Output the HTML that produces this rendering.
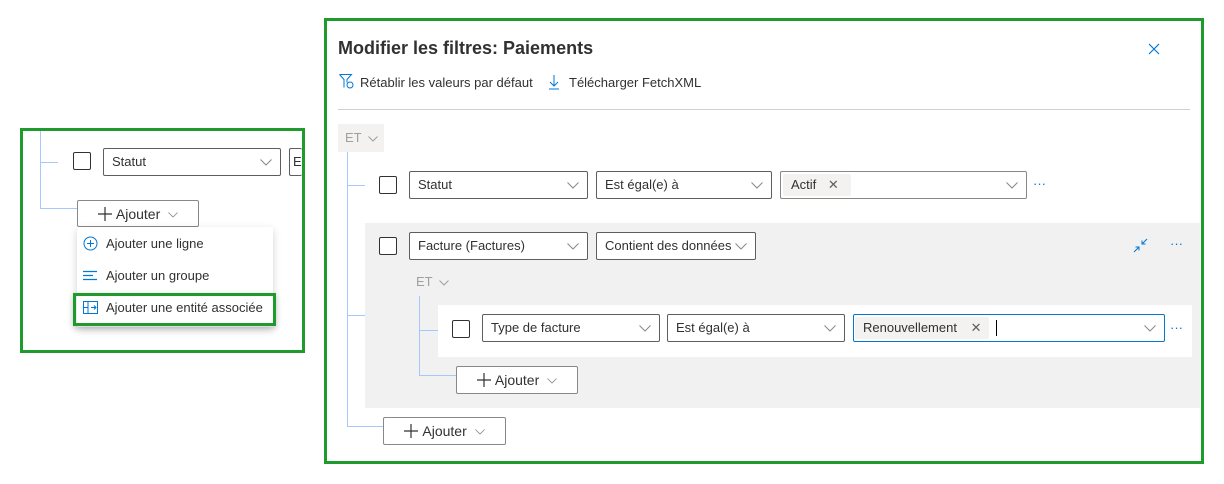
<!DOCTYPE html>
<html><head><meta charset="utf-8"><style>
*{box-sizing:border-box;margin:0;padding:0}
body{width:1224px;height:484px;background:#fff;position:relative;overflow:hidden;font-family:"Liberation Sans",sans-serif;color:#323130;font-size:13px}
.a{position:absolute}
.gb{position:absolute;border:3px solid #1f9a2c}
.dd{position:absolute;border:1px solid #605e5c;border-radius:2px;background:#fff;height:28px;line-height:26px;padding-left:8px;font-size:13px;white-space:nowrap;overflow:hidden}
.dd svg{position:absolute;right:8px;top:10px}
.cb{position:absolute;width:18px;height:18px;border:1px solid #323130;border-radius:2px;background:#fff}
.ln{position:absolute;background:#a6c8ff}
.btn{position:absolute;border:1px solid #8a8886;border-radius:2px;background:#fff;height:28px;line-height:26px;font-size:14px;text-align:center}
.btn .p{vertical-align:-2px;margin-right:4px}
.dots{position:absolute;color:#0078d4;font-size:13px;letter-spacing:0px}
.chip{position:absolute;background:#f3f2f1;border-radius:2px;height:22px;line-height:22px;padding-left:8px;font-size:13px}
</style></head><body>

<svg width="0" height="0" style="position:absolute"><defs>
<symbol id="ch" viewBox="0 0 12 7"><path d="M0.5 0.5L6 6L11.5 0.5" fill="none" stroke="#8a8886" stroke-width="1"/></symbol>
<symbol id="pl" viewBox="0 0 14 14"><path d="M7 0v14M0 7h14" stroke="#323130" stroke-width="1.2"/></symbol>
</defs></svg>

<!-- left box -->
<div class="gb" style="left:20px;top:128px;width:285px;height:225px"></div>
<div class="ln" style="left:40px;top:131px;width:1px;height:78px"></div>
<div class="ln" style="left:40px;top:162px;width:18px;height:1px"></div>
<div class="ln" style="left:40px;top:208px;width:37px;height:1px"></div>
<div class="cb" style="left:73px;top:152px"></div>
<div class="dd" style="left:103px;top:148px;width:178px">Statut<svg width="12" height="7"><use href="#ch"/></svg></div>
<div class="dd" style="left:289px;top:148px;width:13px;padding-left:3px;border-right:none">E</div>
<div class="btn" style="left:77px;top:200px;width:122px;height:27px"><svg class="p" width="14" height="14"><use href="#pl"/></svg>Ajouter <svg width="10" height="6" style="margin-left:4px;vertical-align:middle"><use href="#ch"/></svg></div>
<div class="a" style="left:77px;top:227px;width:196px;height:100px;background:#fff;box-shadow:0 3px 8px rgba(0,0,0,.18)"></div>
<svg class="a" style="left:83px;top:236px" width="15" height="15"><circle cx="7.5" cy="7.5" r="6.5" fill="none" stroke="#0078d4"/><path d="M7.5 4v7M4 7.5h7" stroke="#0078d4"/></svg>
<div class="a" style="left:106px;top:236px;font-size:13px">Ajouter une ligne</div>
<svg class="a" style="left:83px;top:270px" width="15" height="12"><path d="M0 1.5h14M0 5.5h10M0 9.5h14" stroke="#0078d4" stroke-width="1.2"/></svg>
<div class="a" style="left:106px;top:268px;font-size:13px">Ajouter un groupe</div>
<div class="a" style="left:73px;top:293px;width:203px;height:33px;border:3px solid #1f9a2c;box-shadow:0 2px 6px rgba(0,0,0,.2)"></div>
<svg class="a" style="left:83px;top:301px" width="15" height="13"><rect x="0.5" y="0.5" width="14" height="12" fill="none" stroke="#0078d4"/><path d="M5 0.5v12M0.5 6.5h4.5M8 6.5h5M11 4.5l2 2-2 2" stroke="#0078d4" fill="none"/></svg>
<div class="a" style="left:106px;top:300px;font-size:13px">Ajouter une entité associée</div>

<!-- main box -->
<div class="gb" style="left:324px;top:18px;width:880px;height:446px"></div>
<div class="a" style="left:338px;top:38px;font-size:18px;font-weight:bold;color:#323130">Modifier les filtres: Paiements</div>
<svg class="a" style="left:1148px;top:43px" width="12" height="12"><path d="M1 1l10 10M11 1L1 11" stroke="#0078d4" stroke-width="1.2"/></svg>
<svg class="a" style="left:339px;top:74px" width="16" height="16"><path d="M0.5 0.5h12l-4.5 5v3M0.5 0.5l4.5 5v8" fill="none" stroke="#0078d4"/><circle cx="11" cy="11" r="3" fill="none" stroke="#0078d4"/></svg>
<div class="a" style="left:360px;top:75px;font-size:13px">Rétablir les valeurs par défaut</div>
<svg class="a" style="left:548px;top:75px" width="12" height="15"><path d="M6 0v11M2 7l4 4 4-4M1 14h10" fill="none" stroke="#0078d4"/></svg>
<div class="a" style="left:569px;top:75px;font-size:13px">Télécharger FetchXML</div>
<div class="a" style="left:338px;top:109px;width:852px;height:1px;background:#d2d0ce"></div>

<div class="a" style="left:338px;top:124px;width:46px;height:28px;background:#f3f2f1;color:#a19f9d;line-height:28px;padding-left:7px;font-size:13px">ET <svg width="10" height="6" style="margin-left:3px;vertical-align:middle"><path d="M0.5 0.5L5 5L9.5 0.5" fill="none" stroke="#a19f9d"/></svg></div>
<div class="ln" style="left:347px;top:152px;width:1px;height:275px"></div>
<div class="ln" style="left:347px;top:185px;width:18px;height:1px"></div>
<div class="cb" style="left:379px;top:176px"></div>
<div class="dd" style="left:409px;top:171px;width:179px">Statut<svg width="12" height="7"><use href="#ch"/></svg></div>
<div class="dd" style="left:596px;top:171px;width:176px">Est égal(e) à<svg width="12" height="7"><use href="#ch"/></svg></div>
<div class="dd" style="left:780px;top:171px;width:247px;border-color:#8a8886"><svg width="12" height="7"><use href="#ch"/></svg></div>
<div class="chip" style="left:783px;top:174px;width:68px">Actif <span style="margin-left:8px;color:#605e5c">✕</span></div>
<div class="dots" style="left:1033px;top:176px">···</div>

<div class="a" style="left:365px;top:223px;width:835px;height:185px;background:#f1f1f1"></div>
<div class="ln" style="left:347px;top:315px;width:18px;height:1px"></div>
<div class="cb" style="left:379px;top:237px"></div>
<div class="dd" style="left:409px;top:232px;width:179px">Facture (Factures)<svg width="12" height="7"><use href="#ch"/></svg></div>
<div class="dd" style="left:596px;top:232px;width:160px">Contient des données<svg width="12" height="7"><use href="#ch"/></svg></div>
<svg class="a" style="left:1133px;top:238px" width="15" height="15"><path d="M1 14L6 9M2.5 9H6V12.5M14 1L9 6M12.5 6H9V2.5" fill="none" stroke="#0078d4"/></svg>
<div class="dots" style="left:1170px;top:236px">···</div>

<div class="a" style="left:416px;top:274px;color:#a19f9d;font-size:13px">ET <svg width="10" height="6" style="margin-left:3px;vertical-align:middle"><path d="M0.5 0.5L5 5L9.5 0.5" fill="none" stroke="#a19f9d"/></svg></div>
<div class="ln" style="left:419px;top:296px;width:1px;height:80px"></div>
<div class="ln" style="left:419px;top:330px;width:19px;height:1px"></div>
<div class="ln" style="left:419px;top:375px;width:37px;height:1px"></div>
<div class="a" style="left:438px;top:305px;width:754px;height:52px;background:#fff"></div>
<div class="cb" style="left:452px;top:320px"></div>
<div class="dd" style="left:482px;top:314px;width:178px">Type de facture<svg width="12" height="7"><use href="#ch"/></svg></div>
<div class="dd" style="left:667px;top:314px;width:178px">Est égal(e) à<svg width="12" height="7"><use href="#ch"/></svg></div>
<div class="dd" style="left:853px;top:314px;width:312px;border-color:#0078d4"><svg width="12" height="7"><use href="#ch"/></svg></div>
<div class="chip" style="left:855px;top:317px;width:134px">Renouvellement <span style="margin-left:10px;color:#605e5c">✕</span></div>
<div class="a" style="left:996px;top:320px;width:1px;height:16px;background:#000"></div>
<div class="dots" style="left:1170px;top:320px">···</div>

<div class="btn" style="left:456px;top:366px;width:122px"><svg class="p" width="14" height="14"><use href="#pl"/></svg>Ajouter <svg width="10" height="6" style="margin-left:4px;vertical-align:middle"><use href="#ch"/></svg></div>
<div class="ln" style="left:347px;top:426px;width:36px;height:1px"></div>
<div class="btn" style="left:383px;top:417px;width:123px"><svg class="p" width="14" height="14"><use href="#pl"/></svg>Ajouter <svg width="10" height="6" style="margin-left:4px;vertical-align:middle"><use href="#ch"/></svg></div>
</body></html>
